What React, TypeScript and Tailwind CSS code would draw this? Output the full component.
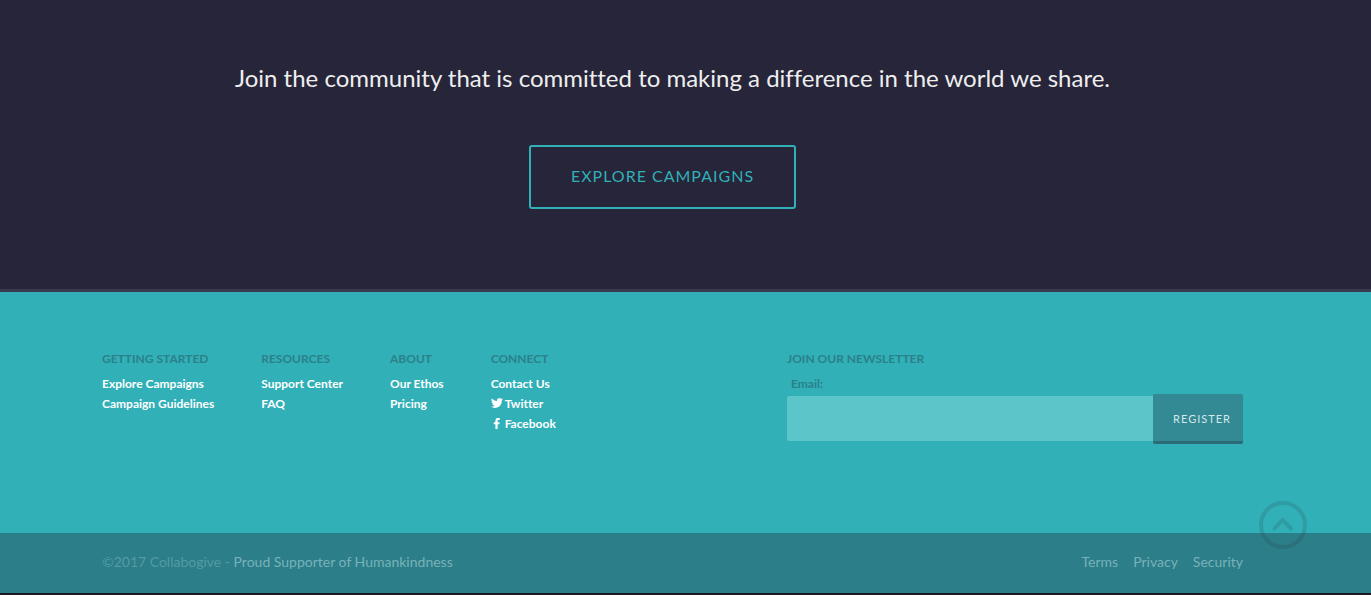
type Column = { title: string; links: { label: string; icon?: 'twitter' | 'facebook' }[] };

const columns: Column[] = [
  { title: 'Getting Started', links: [{ label: 'Explore Campaigns' }, { label: 'Campaign Guidelines' }] },
  { title: 'Resources', links: [{ label: 'Support Center' }, { label: 'FAQ' }] },
  { title: 'About', links: [{ label: 'Our Ethos' }, { label: 'Pricing' }] },
  {
    title: 'Connect',
    links: [{ label: 'Contact Us' }, { label: 'Twitter', icon: 'twitter' }, { label: 'Facebook', icon: 'facebook' }],
  },
];

function SocialIcon({ name }: { name: 'twitter' | 'facebook' }) {
  if (name === 'twitter') {
    return (
      <svg viewBox="0 0 24 24" className="mr-0.5 size-3 shrink-0 fill-white" aria-hidden="true">
        <path d="M23.95 2.57a10 10 0 0 1-2.82.77 4.96 4.96 0 0 0 2.16-2.72 9.9 9.9 0 0 1-3.12 1.19 4.92 4.92 0 0 0-8.39 4.48A13.93 13.93 0 0 1 1.64 1.16a4.92 4.92 0 0 0 1.52 6.57 4.9 4.9 0 0 1-2.23-.61v.06a4.92 4.92 0 0 0 3.95 4.83 5 5 0 0 1-2.21.08 4.94 4.94 0 0 0 4.6 3.42A9.87 9.87 0 0 1 0 17.54a13.99 13.99 0 0 0 7.55 2.21c9.06 0 14.01-7.5 14.01-13.98 0-.21 0-.42-.02-.63a9.94 9.94 0 0 0 2.46-2.55z" />
      </svg>
    );
  }
  return (
    <svg viewBox="0 0 24 24" className="mr-0.5 size-3 shrink-0 fill-white" aria-hidden="true">
      <path d="M8.8 22V12.4H5.6V8.3h3.2V5.4C8.8 1.8 10.9-.2 14.3-.2c1.5 0 2.6.1 3.1.2v3.8h-2.1c-1.6 0-2 .8-2 1.9v2.6h3.9l-.5 4.1h-3.4V22z" />
    </svg>
  );
}

export default function App() {
  return (
    <div className="min-h-screen bg-[#191b23] font-['Lato',sans-serif] [font-variant-ligatures:no-common-ligatures]">
      <section className="border-b-3 border-[#3a394d] bg-[#272539] pt-15 pr-32 pb-20 pl-[102px] text-center">
        <h2 className="text-2xl leading-9 font-normal text-[#eeeeee]">
          Join the community that is committed to making a difference in the world we share.
        </h2>
        <a
          href="#campaigns"
          className="mt-[49px] mr-5 inline-block rounded-[3px] border-2 border-[#31b0b7] px-10 pt-[17px] pb-[19px] align-top text-base leading-6 tracking-[1px] text-[#31b0b7] uppercase"
        >
          Explore Campaigns
        </a>
      </section>

      <footer className="relative">
        <div className="flex justify-between bg-[#31b0b7] pt-14 pr-32 pb-[89px] pl-[102px] text-xs leading-5 font-bold">
          <nav className="flex gap-[47px]" aria-label="Footer">
            {columns.map((column) => (
              <div key={column.title}>
                <h3 className="mb-[5px] leading-[21px] text-[#2b8089] uppercase">{column.title}</h3>
                <ul className="text-white">
                  {column.links.map((link) => (
                    <li key={link.label}>
                      <a href="#footer" className="flex items-center">
                        {link.icon && <SocialIcon name={link.icon} />}
                        {link.label}
                      </a>
                    </li>
                  ))}
                </ul>
              </div>
            ))}
          </nav>

          <form className="w-2/5 max-w-[456px] text-[#2b8089]" onSubmit={(event) => event.preventDefault()}>
            <h3 className="mb-[5px] leading-[21px] uppercase">Join our newsletter</h3>
            <label htmlFor="email" className="block pl-1">
              Email:
            </label>
            <div className="flex">
              <input
                id="email"
                type="email"
                className="mt-0.5 h-[45px] min-w-0 flex-1 rounded-l-xs bg-[#5bc5ca] px-3 font-normal text-[#272539] outline-none"
              />
              <button
                type="submit"
                className="h-[50px] rounded-xs border-b-3 border-[#2a6b76] bg-[#338994] pt-0.5 pr-3 pl-5 text-[11px] font-normal tracking-[1px] text-[#d5e7e9] uppercase"
              >
                Register
              </button>
            </div>
          </form>
        </div>

        <div className="flex justify-between bg-[#2c7e89] pt-[17px] pr-32 pb-[19px] pl-[102px] text-sm leading-6 text-[#78b2b9]">
          <p>
            <span className="text-[#539ca5]">©2017 Collabogive - </span>
            Proud Supporter of Humankindness
          </p>
          <nav className="flex gap-[15px]" aria-label="Legal">
            <a href="#terms">Terms</a>
            <a href="#privacy">Privacy</a>
            <a href="#security">Security</a>
          </nav>
        </div>

        <button type="button" aria-label="Back to top" className="absolute right-16 bottom-11 size-12">
          <svg viewBox="0 0 48 48" fill="none" className="size-12 stroke-[#272539]/15" aria-hidden="true">
            <circle cx="24" cy="24" r="22" strokeWidth="4" />
            <path d="M15.5 27.5 23.5 19 32 27.5" strokeWidth="4" strokeLinecap="round" strokeLinejoin="round" />
          </svg>
        </button>
      </footer>
    </div>
  );
}
